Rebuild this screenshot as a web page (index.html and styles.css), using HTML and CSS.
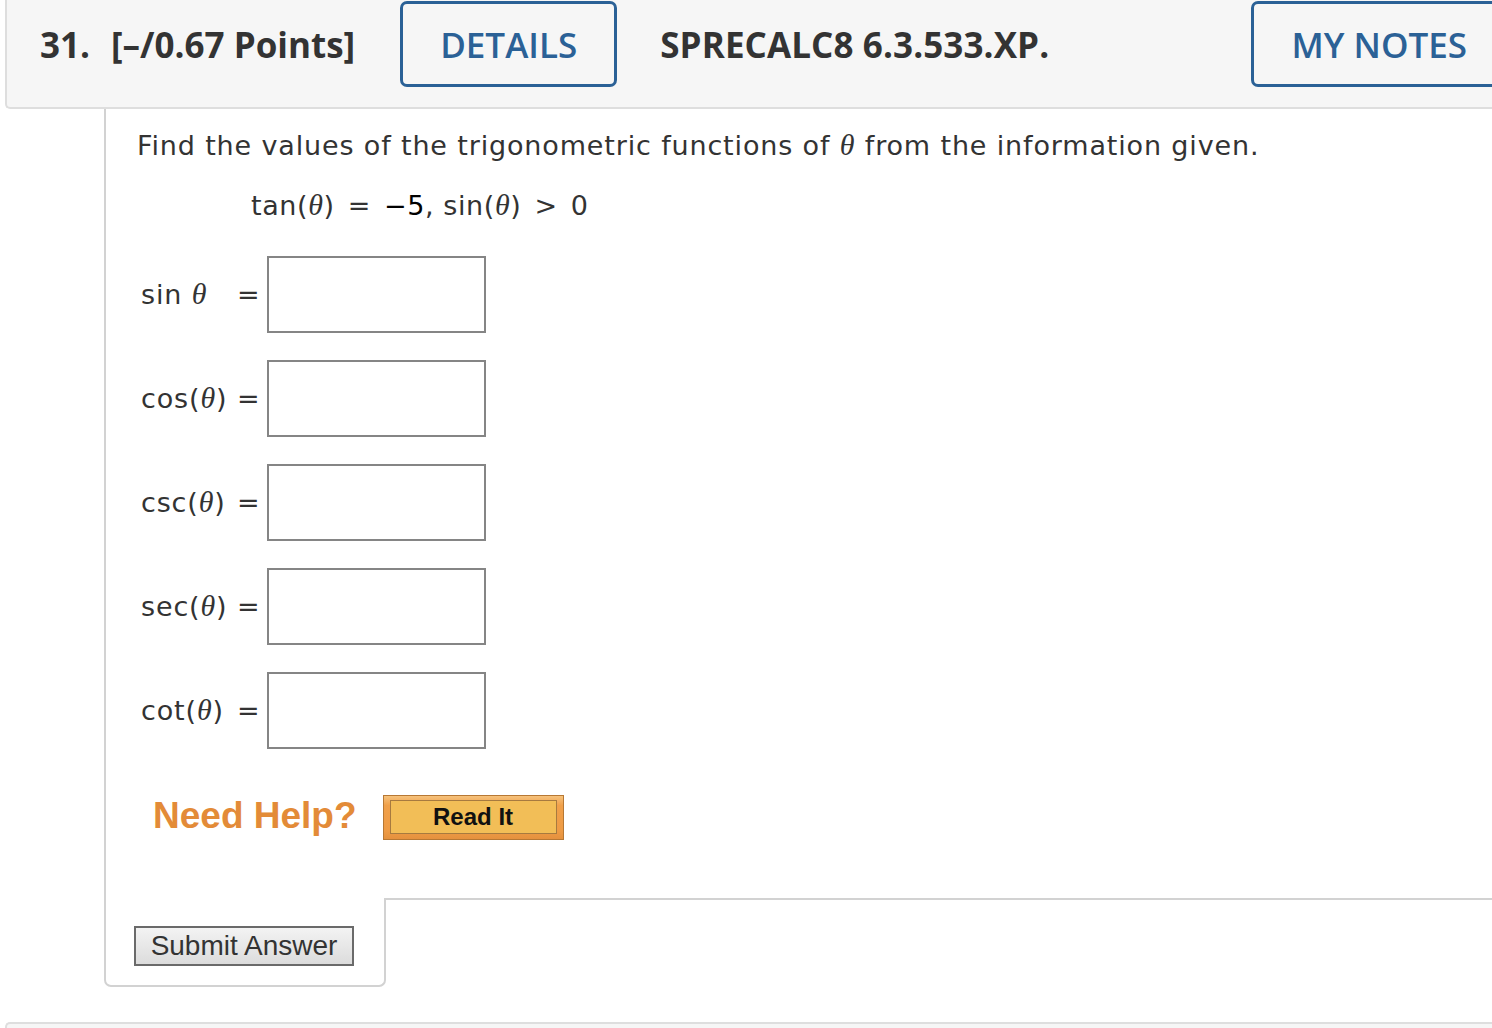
FILE: index.html
```html
<!DOCTYPE html>
<html lang="en">
<head>
<meta charset="utf-8">
<title>Question 31</title>
<link rel="stylesheet" href="styles.css">
</head>
<body>
<div class="page">
  <header class="qhead">
    <span class="qnum">31.</span>
    <span class="qpoints">[–/0.67 Points]</span>
    <button class="outline-btn details-btn">DETAILS</button>
    <span class="qcode">SPRECALC8 6.3.533.XP.</span>
    <button class="outline-btn notes-btn">MY NOTES</button>
  </header>

  <section class="qpanel">
    <p class="prompt">Find the values of the trigonometric functions of <i class="th">θ</i> from the information given.</p>
    <p class="given">tan(<i class="th">θ</i>)<span class="op">=</span><span class="dark">−5</span>, sin(<i class="th">θ</i>)<span class="op">&gt;</span>0</p>

    <div class="answers">
      <div class="arow">
        <span class="alabel">sin <i class="th">θ</i></span><span class="aeq">=</span><input class="abox" type="text">
      </div>
      <div class="arow">
        <span class="alabel">cos(<i class="th">θ</i>)</span><span class="aeq">=</span><input class="abox" type="text">
      </div>
      <div class="arow">
        <span class="alabel">csc(<i class="th">θ</i>)</span><span class="aeq">=</span><input class="abox" type="text">
      </div>
      <div class="arow">
        <span class="alabel">sec(<i class="th">θ</i>)</span><span class="aeq">=</span><input class="abox" type="text">
      </div>
      <div class="arow">
        <span class="alabel">cot(<i class="th">θ</i>)</span><span class="aeq">=</span><input class="abox" type="text">
      </div>
    </div>

    <div class="help">
      <span class="help-label">Need Help?</span>
      <button class="readit"><span class="readit-inner">Read It</span></button>
    </div>
  </section>

  <div class="submit-tab">
    <button class="submit-btn">Submit Answer</button>
  </div>

  <div class="next-head"></div>
</div>
</body>
</html>
```

FILE: styles.css
```css
* { box-sizing: border-box; }

html, body {
  margin: 0;
  padding: 0;
  background: #ffffff;
  overflow: hidden;
}

.page {
  width: 1492px;
  height: 1028px;
  overflow: hidden;
}

/* ---------- header ---------- */
.qhead {
  display: flex;
  align-items: center;
  margin-left: 5px;
  width: 1530px;
  height: 109px;
  padding: 3px 0 22px 33px;
  background: #f6f6f6;
  border-left: 2px solid #dedede;
  border-bottom: 2px solid #dedede;
  border-bottom-left-radius: 5px;
  font-family: "Open Sans", "Liberation Sans", sans-serif;
  color: #333333;
}

.qnum,
.qpoints,
.qcode {
  font-weight: 700;
  font-size: 35px;
  line-height: 1;
  white-space: nowrap;
}

.qpoints { margin-left: 21px; }

.outline-btn {
  height: 86px;
  padding: 0 37px;
  border: 3px solid #2b6196;
  border-radius: 7px;
  background: transparent;
  color: #2b6196;
  font-family: "Open Sans", "Liberation Sans", sans-serif;
  font-weight: 600;
  font-size: 35px;
  line-height: 1;
  white-space: nowrap;
}

.details-btn { margin-left: 45px; }
.qcode { margin-left: 43px; letter-spacing: 0.1px; }
.notes-btn { margin-left: auto; margin-right: 28px; }

/* ---------- question panel ---------- */
.qpanel {
  margin-left: 104px;
  padding: 18px 0 58px 31px;
  border-left: 2px solid #d2d2d2;
  border-bottom: 2px solid #d2d2d2;
  font-family: "DejaVu Sans", Verdana, sans-serif;
  font-size: 27px;
  letter-spacing: 0.85px;
  color: #333333;
}

.th {
  font-family: "Liberation Serif", "DejaVu Serif", serif;
  font-style: italic;
  font-size: 30px;
}

.prompt {
  margin: 0;
  line-height: 36px;
}

.given {
  margin: 23px 0 0 114px;
  line-height: 36px;
  letter-spacing: 0.6px;
}

.op { margin: 0 13px; }
.dark { color: #000000; }

.answers {
  display: flex;
  flex-direction: column;
  gap: 28px;
  margin-top: 32px;
  padding-left: 4px;
}

.arow {
  display: flex;
  align-items: center;
  height: 76px;
}

.alabel {
  width: 96px;
  white-space: nowrap;
}

.aeq {
  width: 23px;
  margin-right: 7px;
  letter-spacing: 0;
}

.abox {
  width: 219px;
  height: 77px;
  border: 2px solid #858585;
  border-radius: 0;
  background: #ffffff;
  margin: 0;
}

/* ---------- help ---------- */
.help {
  display: flex;
  align-items: center;
  gap: 26px;
  margin-top: 43px;
  padding-left: 16px;
  letter-spacing: 0;
}

.help-label {
  font-family: "Liberation Sans", Arial, sans-serif;
  font-weight: 700;
  font-size: 37px;
  color: #e38b38;
  line-height: 1;
}

.readit {
  width: 181px;
  height: 45px;
  padding: 4px 6px 5px 6px;
  margin-top: 4px;
  border: 1px solid #b77834;
  background: linear-gradient(#f6c27c 0%, #f0a04a 22%, #ee9b45 80%, #e5913e 100%);
  cursor: pointer;
}

.readit-inner {
  display: flex;
  align-items: center;
  justify-content: center;
  width: 100%;
  height: 100%;
  border: 1px solid #a77a3f;
  background: #f2be57;
  font-family: "Liberation Sans", Arial, sans-serif;
  font-weight: 700;
  font-size: 24px;
  color: #111111;
  line-height: 1;
}

/* ---------- submit tab ---------- */
.submit-tab {
  position: relative;
  z-index: 1;
  width: 282px;
  margin-left: 104px;
  margin-top: -2px;
  padding: 28px 0 19px 28px;
  background: #ffffff;
  border-left: 2px solid #d2d2d2;
  border-right: 2px solid #d2d2d2;
  border-bottom: 2px solid #d2d2d2;
  border-radius: 0 0 7px 7px;
}

.submit-btn {
  display: block;
  width: 220px;
  height: 40px;
  padding: 0;
  border: 2px solid #6a6a6a;
  background: linear-gradient(#f3f3f3, #dcdcdc);
  font-family: "Liberation Sans", Arial, sans-serif;
  font-size: 28px;
  color: #333333;
  line-height: 1;
}

/* ---------- next question header ---------- */
.next-head {
  margin-top: 35px;
  margin-left: 5px;
  height: 40px;
  background: #f6f6f6;
  border-left: 2px solid #dedede;
  border-top: 2px solid #dedede;
  border-top-left-radius: 5px;
}
```
